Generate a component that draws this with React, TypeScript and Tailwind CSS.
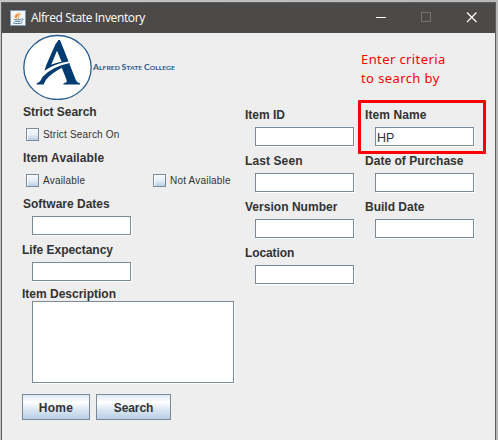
import type { ReactNode } from "react";

function Label({ children, className = "" }: { children: ReactNode; className?: string }) {
  return (
    <div className={`h-[22px] whitespace-nowrap text-[12px] leading-[22px] font-bold text-[#333] ${className}`}>
      {children}
    </div>
  );
}

function TextField({ value = "" }: { value?: string }) {
  return (
    <input
      readOnly
      value={value}
      className="mt-px ml-[10px] block h-[19px] w-[99px] border border-[#7a8a99] bg-white px-px pt-[2px] text-[12.5px] text-[#333] shadow-[1px_1px_0_#fff] outline-none"
    />
  );
}

function Field({ label, tracking, value }: { label: string; tracking: string; value?: string }) {
  return (
    <div className="h-[46px] w-[120px]">
      <Label className={tracking}>{label}</Label>
      <TextField value={value} />
    </div>
  );
}

function Check({ label, className = "" }: { label: string; className?: string }) {
  return (
    <label className={`flex h-[13px] items-center gap-1 text-[10px] tracking-[0.2px] whitespace-nowrap text-[#333] ${className}`}>
      <span className="size-[13px] shrink-0 border border-[#7a8a99] bg-linear-to-b from-[#f3f8fd] via-[#e6eef7] to-[#b8cfe5] shadow-[inset_1px_1px_0_#fff]" />
      <span>{label}</span>
    </label>
  );
}

function Button({ children, className = "" }: { children: string; className?: string }) {
  return (
    <button
      className={`h-[26px] border border-[#7a8a99] bg-[linear-gradient(#dde8f3_0%,#ffffff_30%,#dce7f2_60%,#b8cfe5_100%)] pt-px text-[12px] font-bold text-[#333] ${className}`}
    >
      {children}
    </button>
  );
}

function JavaIcon() {
  return (
    <svg width="16" height="16" viewBox="0 0 16 16" fill="none">
      <rect width="16" height="16" fill="#7f99b4" />
      <rect x="1" y="1" width="14" height="14" fill="#f3f6f8" />
      <path d="M9.8 1.7C10 4-0.1 5.4 7.2 8.8C5.5 6.5 9.5 5.3 9.8 1.7Z" fill="#ee8b22" />
      <path d="M10.6 4.3C7.3 5.5 9.8 6.6 8 8.7" stroke="#ee8b22" />
      <path d="M4 9.3C6 10 9 10 11 9.2M4.8 11.2C6.5 11.8 8.6 11.8 10.4 11.1M3 12.8C5.5 14 10 13.8 12.3 12.7" stroke="#527b9c" />
      <path d="M11.3 9C14 8.3 13.8 10.6 11.2 11.2" stroke="#527b9c" strokeWidth="0.8" />
    </svg>
  );
}

function Logo() {
  return (
    <svg width="152" height="66" viewBox="0 0 152 66" fill="none">
      <ellipse cx="34.5" cy="33.5" rx="33.7" ry="32" fill="#fff" stroke="#265b8d" strokeWidth="1.3" />
      <g fill="#003b71">
        <path fillRule="evenodd" d="M35.5 6H37L45.6 27.6Q32 29.5 21.4 36.8L23.3 31L32.3 10.5ZM34 16.8L28.2 30.8Q33 28.6 38.6 27.8Z" />
        <path d="M38.5 33L46.5 30L52.3 44.8Q53.8 49 57 49.2V50.4H40.5V49.2Q44.7 49 43.5 45.8Z" />
        <path d="M46.5 30.2Q33.5 35.5 26 42.5Q22 46 20.6 50.4H13.7V49.2Q17.5 48.3 19.4 43Q29 32.5 46.8 29Z" />
      </g>
      <text x="70" y="36" fill="#2b5a8a" fontFamily="Lato, sans-serif" fontWeight="bold" fontSize="6.3" textLength="82" lengthAdjust="spacingAndGlyphs">
        <tspan fontSize="8">A</tspan>LFRED <tspan fontSize="8">S</tspan>TATE <tspan fontSize="8">C</tspan>OLLEGE
      </text>
    </svg>
  );
}

export default function App() {
  return (
    <div className="relative h-[440px] w-[498px] overflow-hidden bg-linear-to-r from-[#c5c5c5] to-[#b7b7b7] pt-[2px] pl-px font-['Liberation_Sans',Arial,sans-serif]">
      <div className="h-[438px] w-[495px] border-x border-t border-[#5e5e5e] bg-[#eee]">
        <header className="flex h-[30px] items-center bg-[#4b4a48] pl-2 text-white">
          <JavaIcon />
          <span className="ml-[5px] w-[120px] font-['Open_Sans',sans-serif] text-[12px] tracking-[-0.35px] whitespace-nowrap">
            Alfred State Inventory
          </span>
          <svg className="ml-auto mr-[17px]" width="103" height="12" viewBox="0 0 103 12" fill="none">
            <path d="M1 5.5H11" stroke="#fff" />
            <rect x="46.5" y="0.5" width="9" height="9" stroke="#73726f" />
            <path d="M92 0.5L101.5 10M101.5 0.5L92 10" stroke="#fff" strokeWidth="1.2" />
          </svg>
        </header>

        <div className="flex h-[68px]">
          <div className="w-[359px] pt-px pl-[21px]">
            <Logo />
          </div>
          <p className="pt-[17px] font-['Noto_Sans',sans-serif] text-[13px] leading-[19px] tracking-[0.4px] whitespace-nowrap text-[#f00]">
            Enter criteria
            <br />
            to search by
          </p>
        </div>

        <main className="flex">
          <section className="w-[243px] pl-5">
            <div className="h-[46px] pl-px">
              <Label className="tracking-[-0.03px]">Strict Search</Label>
              <Check label="Strict Search On" className="mt-[5px] ml-[3px]" />
            </div>
            <div className="h-[46px] pl-px">
              <Label className="tracking-[0.1px]">Item Available</Label>
              <div className="flex pt-[5px] pl-[3px]">
                <Check label="Available" className="w-[127px]" />
                <Check label="Not Available" />
              </div>
            </div>
            <Field label="Software Dates" tracking="tracking-[0px] pl-px" />
            <Field label="Life Expectancy" tracking="tracking-[-0.03px]" />
            <Label className="!h-4 !leading-[18px] tracking-[0px]">Item Description</Label>
            <textarea
              readOnly
              className="ml-[10px] block h-[82px] w-[202px] resize-none border border-[#7a8a99] bg-white shadow-[1px_1px_0_#fff] outline-none"
            />
            <div className="mt-[11px] flex gap-[6px]">
              <Button className="w-[68px] tracking-[0.3px]">Home</Button>
              <Button className="w-[75px] tracking-[-0.1px]">Search</Button>
            </div>
          </section>

          <section className="grid h-[184px] grid-cols-[120px_120px] pt-[3px]">
            <Field label="Item ID" tracking="tracking-[0px]" />
            <Field label="Item Name" tracking="tracking-[0.1px]" value="HP" />
            <Field label="Last Seen" tracking="tracking-[0.1px]" />
            <Field label="Date of Purchase" tracking="tracking-[0.03px]" />
            <Field label="Version Number" tracking="tracking-[0.03px]" />
            <Field label="Build Date" tracking="tracking-[0px]" />
            <Field label="Location" tracking="tracking-[-0.1px]" />
          </section>
        </main>
      </div>
      <div className="pointer-events-none absolute top-[100px] left-[358px] h-[54px] w-[128px] rounded-[1px] border-[3px] border-[#f00]" />
    </div>
  );
}
